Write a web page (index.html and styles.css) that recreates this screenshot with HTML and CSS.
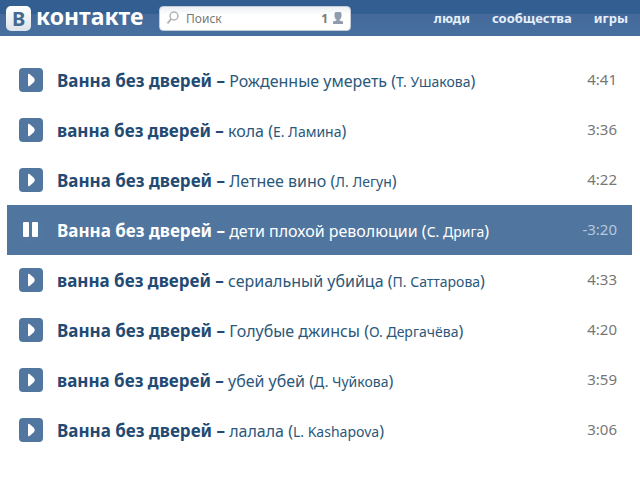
FILE: index.html
```html
<!DOCTYPE html>
<html lang="ru">
<head>
    <meta charset="UTF-8">
    <meta name="viewport" content="width=device-width, initial-scale=1.0">
    <title>Аудиозаписи</title>
    <link rel="stylesheet" href="styles.css">
</head>
<body>
    <svg width="0" height="0" class="sprite">
        <symbol id="play" viewBox="0 0 24 24">
            <path d="M9 7Q9 5 10.500 6L14.500 9.500Q17 12 14.500 14.500L10.500 18Q9 19 9 17Z" fill="#fff"/>
        </symbol>
    </svg>

    <header class="header">
        <a href="#" class="logo"><span class="logo-mark">В</span><span class="logo-name">контакте</span></a>
        <div class="search">
            <svg class="search-icon" viewBox="0 0 14 14">
                <circle cx="8" cy="5" r="4" fill="none" stroke="#b4b4b4" stroke-width="1.500"/>
                <path d="M5 8L1.500 12.500" stroke="#b4b4b4" stroke-width="2"/>
            </svg>
            <input type="text" class="search-input" placeholder="Поиск" aria-label="Поиск">
            <span class="online">1</span>
            <svg class="user-icon" viewBox="0 0 12 12">
                <path d="M3.500 0H8.500L9.500 1.500V4.500Q9 7 7.500 7.500V8.500L11 9.500V12H1V9.500L4.500 8.500V7.500Q3 7 2.500 4.500V1.500Z" fill="#8e9cac"/>
            </svg>
        </div>
        <nav class="nav">
            <a href="#">люди</a>
            <a href="#">сообщества</a>
            <a href="#">игры</a>
        </nav>
    </header>

    <main class="playlist">
        <div class="track">
            <button class="play" aria-label="Играть"><svg><use href="#play"/></svg></button>
            <p class="title"><b>Ванна без дверей –</b> <a href="#">Рожденные умереть</a> (<span class="author">Т. Ушакова</span>)</p>
            <span class="time">4:41</span>
        </div>
        <div class="track">
            <button class="play" aria-label="Играть"><svg><use href="#play"/></svg></button>
            <p class="title"><b>ванна без дверей –</b> <a href="#">кола</a> (<span class="author">Е. Ламина</span>)</p>
            <span class="time">3:36</span>
        </div>
        <div class="track">
            <button class="play" aria-label="Играть"><svg><use href="#play"/></svg></button>
            <p class="title"><b>Ванна без дверей –</b> <a href="#">Летнее вино</a> (<span class="author">Л. Легун</span>)</p>
            <span class="time">4:22</span>
        </div>
        <div class="track current">
            <button class="play" aria-label="Пауза">
                <svg viewBox="0 0 24 24">
                    <rect x="4" y="4" width="6" height="15" rx="1" fill="#fff"/>
                    <rect x="13" y="4" width="6" height="15" rx="1" fill="#fff"/>
                </svg>
            </button>
            <p class="title"><b>Ванна без дверей –</b> <a href="#">дети плохой революции</a> (<span class="author">С. Дрига</span>)</p>
            <span class="time">-3:20</span>
        </div>
        <div class="track">
            <button class="play" aria-label="Играть"><svg><use href="#play"/></svg></button>
            <p class="title"><b>ванна без дверей –</b> <a href="#">сериальный убийца</a> (<span class="author">П. Саттарова</span>)</p>
            <span class="time">4:33</span>
        </div>
        <div class="track">
            <button class="play" aria-label="Играть"><svg><use href="#play"/></svg></button>
            <p class="title"><b>Ванна без дверей –</b> <a href="#">Голубые джинсы</a> (<span class="author">О. Дергачёва</span>)</p>
            <span class="time">4:20</span>
        </div>
        <div class="track">
            <button class="play" aria-label="Играть"><svg><use href="#play"/></svg></button>
            <p class="title"><b>ванна без дверей –</b> <a href="#">убей убей</a> (<span class="author">Д. Чуйкова</span>)</p>
            <span class="time">3:59</span>
        </div>
        <div class="track">
            <button class="play" aria-label="Играть"><svg><use href="#play"/></svg></button>
            <p class="title"><b>Ванна без дверей –</b> <a href="#">лалала</a> (<span class="author">L. Kashapova</span>)</p>
            <span class="time">3:06</span>
        </div>
    </main>
</body>
</html>
```
FILE: styles.css
```css
* {
    box-sizing: border-box;
}
body {
    margin: 0;
    background: #fff;
    font-family: Tahoma, "Noto Sans", sans-serif;
    color: #2b587a;
}
a {
    color: inherit;
    text-decoration: none;
}
.sprite {
    position: absolute;
}
.header {
    display: flex;
    align-items: center;
    height: 36px;
    padding: 0 12px 0 6px;
    background: linear-gradient(#335e92 14px, #45699a 14px, #47709f);
    color: #fff;
}
.logo {
    display: flex;
    align-items: center;
    gap: 5px;
    width: 153px;
    font-family: "Noto Sans", sans-serif;
    font-weight: bold;
}
.logo-mark {
    width: 25px;
    height: 25px;
    border-radius: 5px;
    background: linear-gradient(#fff, #dde3ea);
    color: #45688e;
    font-size: 20px;
    line-height: 25px;
    text-align: center;
}
.logo-name {
    font-size: 23px;
    line-height: 28px;
    padding-bottom: 4px;
}
.search {
    display: flex;
    align-items: center;
    width: 192px;
    height: 25px;
    padding: 0 6px;
    border: 1px solid #c3cbd6;
    border-radius: 4px;
    background: linear-gradient(#eceff3, #fff 8px);
}
.search-icon {
    width: 14px;
    height: 14px;
}
.search-input {
    flex: 1;
    min-width: 0;
    padding: 0 0 0 6px;
    border: 0;
    outline: 0;
    background: none;
    font-family: inherit;
    font-size: 12px;
    color: #777;
}
.search-input::placeholder {
    color: #777;
}
.online {
    margin-right: 4px;
    font-size: 12px;
    font-weight: bold;
    color: #777;
}
.user-icon {
    width: 12px;
    height: 12px;
}
.nav {
    display: flex;
    gap: 22px;
    margin-left: auto;
    font-size: 13px;
    font-weight: bold;
    color: #e4effb;
}
.playlist {
    padding: 19px 8px 24px 7px;
}
.track {
    display: flex;
    align-items: center;
    height: 50px;
    padding: 0 15px 0 12px;
}
.play {
    width: 24px;
    height: 24px;
    padding: 0;
    border: 0;
    border-radius: 4px;
    background: #51769f;
    cursor: pointer;
}
.play svg {
    display: block;
    width: 24px;
    height: 24px;
}
.title {
    flex: 1;
    margin: 0;
    padding: 2px 0 0 14px;
    font-size: 16px;
    line-height: 24px;
    white-space: nowrap;
}
.title b {
    font-size: 17px;
    color: #234a72;
}
.author {
    font-size: 14px;
}
.time {
    padding-bottom: 2px;
    font-size: 15px;
    color: #777;
}
.track.current {
    background: #50759e;
    color: #fff;
}
.current b {
    color: #fff;
}
.current .title b {
    color: #fff;
}
.current .time {
    color: #b4c8de;
}
```
